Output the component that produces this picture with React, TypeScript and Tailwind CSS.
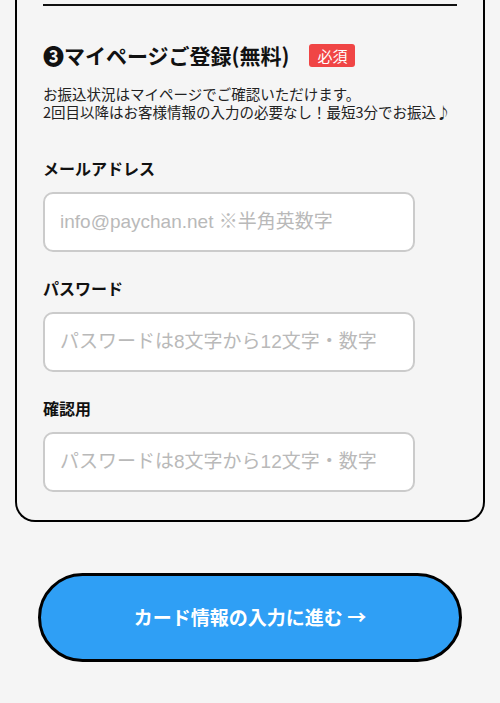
import React from "react";

const jp = "font-['Noto_Sans_CJK_JP','Noto_Sans',sans-serif]";

type FieldProps = {
  label: string;
  placeholder: string;
  type?: string;
};

function Field({ label, placeholder, type = "text" }: FieldProps) {
  return (
    <div className="mt-6 first:mt-0">
      <label className="block text-[16px] leading-6 font-bold text-[#111] mb-3">
        {label}
      </label>
      <input
        type={type}
        placeholder={placeholder}
        className="block w-[372px] h-[60px] rounded-[10px] border-2 border-[#cbcbcb] bg-white px-[15px] text-[19px] text-[#222] placeholder:text-[#b9b9b9] font-['Liberation_Sans','Noto_Sans_CJK_JP',sans-serif] outline-none"
      />
    </div>
  );
}

export default function App() {
  return (
    <div className={`min-h-[703px] bg-[#f5f5f5] ${jp}`}>
      <div className="mx-[15px] w-[470px] border-2 border-t-0 border-black rounded-b-[20px] px-[26px] pt-1 pb-[28px]">
        <div className="h-[2px] bg-[#111]" />

        <div className="mt-[35px] flex items-center h-7">
          <h2 className="text-[21px] leading-7 font-bold text-[#111]">
            ❸マイページご登録(無料)
          </h2>
          <span className="ml-5 inline-flex items-center justify-center w-[46px] h-[23px] rounded-[3px] bg-[#f04545] text-white text-[15px] leading-none">
            必須
          </span>
        </div>

        <div className="mt-[16px] text-[14.5px] leading-[18px] text-[#222]">
          <p>お振込状況はマイページでご確認いただけます。</p>
          <p>2回目以降はお客様情報の入力の必要なし！最短3分でお振込♪</p>
        </div>

        <div className="mt-[35px]">
          <Field label="メールアドレス" placeholder="info@paychan.net ※半角英数字" type="email" />
          <Field label="パスワード" placeholder="パスワードは8文字から12文字・数字" type="password" />
          <Field label="確認用" placeholder="パスワードは8文字から12文字・数字" type="password" />
        </div>
      </div>

      <div className="mt-[51px] px-[38px]">
        <button className="w-[424px] h-[89px] rounded-full border-[3px] border-black bg-[#2f9ff5] text-white text-[19px] font-bold flex items-center justify-center">
          カード情報の入力に進む →
        </button>
      </div>
    </div>
  );
}
